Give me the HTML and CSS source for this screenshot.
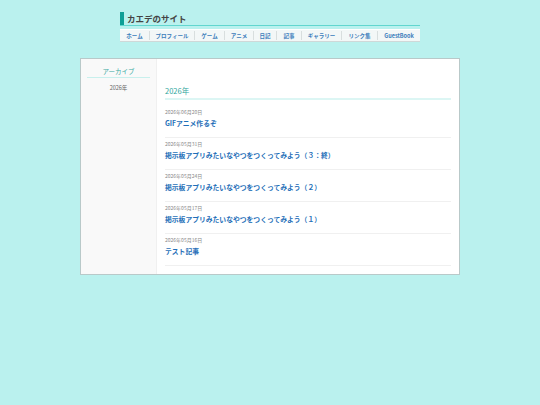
FILE: index.html
```html
<!DOCTYPE html>
<html lang="ja">
<head>
<meta charset="utf-8">
<title>カエデのサイト</title>
<link rel="stylesheet" href="styles.css">
</head>
<body>
<header class="site-header">
  <h1 class="site-title"><span class="site-title-text">カエデのサイト</span></h1>
  <nav class="nav">
    <a class="n1" href="#">ホーム</a>
    <a class="n2" href="#">プロフィール</a>
    <a class="n3" href="#">ゲーム</a>
    <a class="n4" href="#">アニメ</a>
    <a class="n5" href="#">日記</a>
    <a class="n6" href="#">記事</a>
    <a class="n7" href="#">ギャラリー</a>
    <a class="n8" href="#">リンク集</a>
    <a class="n9" href="#">GuestBook</a>
  </nav>
</header>
<div class="panel">
  <aside class="side">
    <h2 class="side-title">アーカイブ</h2>
    <div class="side-item">2026年</div>
  </aside>
  <main class="content">
    <h2 class="year">2026年</h2>
    <div class="posts">
      <article class="post"><div class="date">2026年06月20日</div><a class="post-title" href="#">GIFアニメ作るぞ</a></article>
      <article class="post"><div class="date">2026年05月31日</div><a class="post-title" href="#">掲示板アプリみたいなやつをつくってみよう（３：終）</a></article>
      <article class="post"><div class="date">2026年05月24日</div><a class="post-title" href="#">掲示板アプリみたいなやつをつくってみよう（２）</a></article>
      <article class="post"><div class="date">2026年05月17日</div><a class="post-title" href="#">掲示板アプリみたいなやつをつくってみよう（１）</a></article>
      <article class="post"><div class="date">2026年05月16日</div><a class="post-title" href="#">テスト記事</a></article>
    </div>
  </main>
</div>
</body>
</html>
```
FILE: styles.css
```css
* { box-sizing: border-box; }
html, body { margin: 0; padding: 0; }
body {
  background: #baf1ee;
  height: 405px;
  overflow: hidden;
  font-family: "Noto Sans CJK JP", "Noto Sans", sans-serif;
  color: #333;
}
.site-header { width: 300px; margin: 0 auto; padding-top: 12px; }
.site-title {
  margin: 0;
  height: 14px;
  border-bottom: 1px solid #62d6cf;
  font-size: 8.5px;
  line-height: 13px;
  font-weight: 700;
  color: #444;
}
.site-title-text {
  display: block;
  height: 13px;
  border-left: 4px solid #0e9f96;
  padding-left: 3px;
}
.nav {
  margin-top: 3px;
  height: 13px;
  display: flex;
  align-items: center;
  background: #f3f7f7;
  border-top: 1px solid #fff;
  border-bottom: 1px solid #cfd8d8;
}
.nav a {
  display: block;
  height: 9px;
  line-height: 11px;
  text-align: center;
  font-size: 5.5px;
  font-weight: 700;
  color: #3b7dbb;
  text-decoration: none;
  border-right: 1px solid #d8dede;
}
.nav a:last-child { border-right: 0; }
.n1 { width: 30px; }
.n2 { width: 45px; }
.n3 { width: 30px; }
.n4 { width: 29px; }
.n5 { width: 23px; }
.n6 { width: 25px; }
.n7 { width: 40px; }
.n8 { width: 36px; }
.n9 { width: 42px; }
.panel {
  width: 380px;
  height: 217px;
  margin: 16px 0 0 80px;
  display: flex;
  background: #fff;
  border: 1px solid #b9c9c9;
}
.side {
  width: 76px;
  flex: none;
  background: #f9f9f9;
  border-right: 1px solid #f0f0f0;
  padding: 7px 6px 0;
}
.side-title {
  margin: 0;
  height: 12px;
  font-size: 6.5px;
  line-height: 11px;
  font-weight: 400;
  text-align: center;
  color: #3aa9a2;
  border-bottom: 1px solid #c8f0ed;
}
.side-item {
  margin-top: 6px;
  font-size: 5.5px;
  line-height: 9px;
  text-align: center;
  color: #666;
}
.content { flex: 1; padding: 25px 8px 0; }
.year {
  margin: 0;
  height: 16px;
  font-size: 7.5px;
  line-height: 13px;
  font-weight: 400;
  color: #2fa69e;
  border-bottom: 2px solid #dcf6f4;
}
.posts { padding-top: 6px; }
.post {
  height: 32px;
  padding-top: 2px;
  border-bottom: 1px solid #f0f0f0;
}
.date {
  font-size: 5px;
  line-height: 8px;
  color: #888;
}
.post-title {
  display: block;
  margin-top: 2px;
  font-size: 6.8px;
  line-height: 11px;
  font-weight: 700;
  color: #1f6fb8;
  text-decoration: none;
}
```
